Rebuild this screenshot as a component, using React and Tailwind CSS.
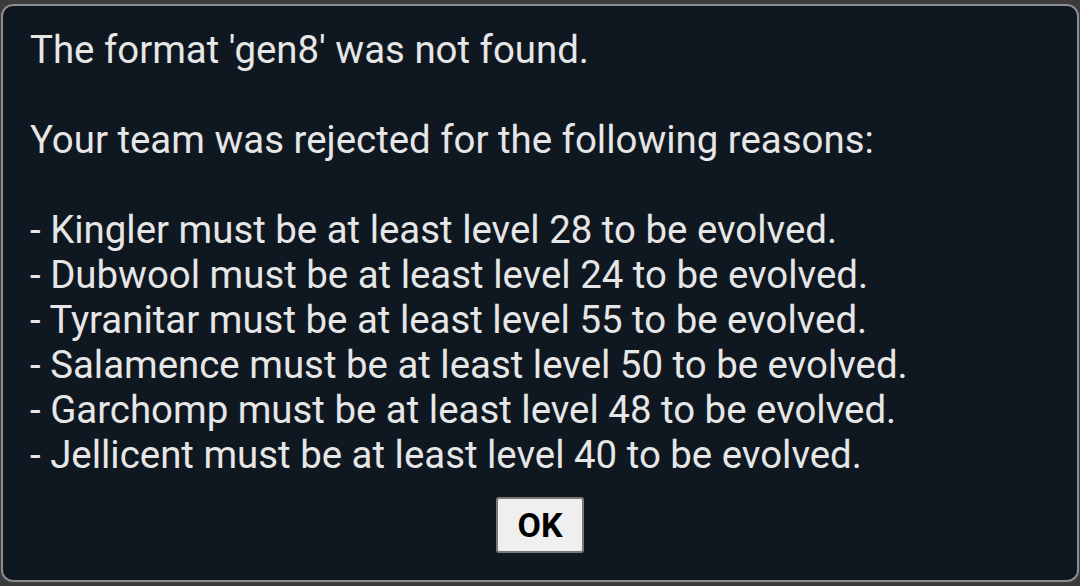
export default function App() {
  const reasons = [
    "Kingler must be at least level 28 to be evolved.",
    "Dubwool must be at least level 24 to be evolved.",
    "Tyranitar must be at least level 55 to be evolved.",
    "Salamence must be at least level 50 to be evolved.",
    "Garchomp must be at least level 48 to be evolved.",
    "Jellicent must be at least level 40 to be evolved.",
  ];

  return (
    <div className="w-[1080px] h-[586px] overflow-hidden bg-[#3b3b3b] pt-[4px] px-[1px] font-['Roboto',sans-serif]">
      <div className="flex h-[578px] flex-col rounded-[12px] border-2 border-[#8d8d8d] bg-[#0f1720] px-[27px] pt-[21px]">
        <p className="text-[38.4px] leading-[45px] text-[#e6e6e6]">
          The format 'gen8' was not found.
          <br />
          <br />
          Your team was rejected for the following reasons:
          <br />
          <br />
          {reasons.map((r) => (
            <span key={r}>
              - {r}
              <br />
            </span>
          ))}
        </p>
        <div className="mt-[20px] flex justify-center">
          <button className="w-[88px] h-[56px] rounded-[3px] border-2 border-[#7a7a7a] bg-[#efefef] text-[34px] font-bold leading-none text-black">
            OK
          </button>
        </div>
      </div>
    </div>
  );
}
